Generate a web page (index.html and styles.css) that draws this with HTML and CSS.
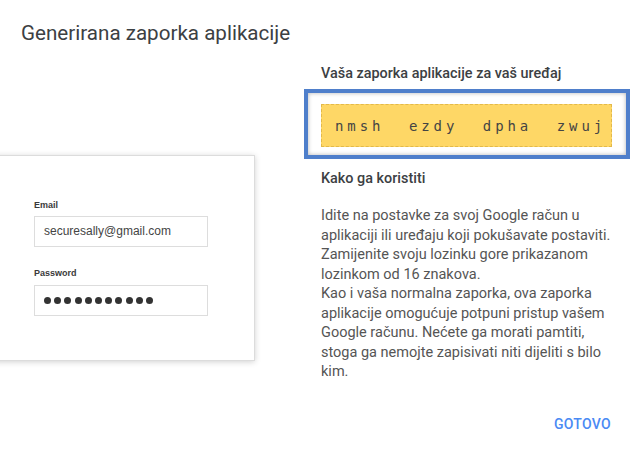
FILE: index.html
```html
<!DOCTYPE html>
<html lang="hr">
<head>
    <meta charset="UTF-8">
    <meta name="viewport" content="width=device-width, initial-scale=1.0">
    <title>Generirana zaporka aplikacije</title>
    <link rel="stylesheet" href="styles.css">
</head>
<body>

    <div class="dialog">
        <h1 class="dialog-title">Generirana zaporka aplikacije</h1>

        <div class="dialog-body">
            <!-- Sample sign-in form -->
            <div class="preview">
                <div class="login-card">
                    <label class="field-label">Email</label>
                    <div class="field">securesally@gmail.com</div>
                    <label class="field-label pw-label">Password</label>
                    <div class="field dots">
                        <span></span><span></span><span></span><span></span>
                        <span></span><span></span><span></span><span></span>
                        <span></span><span></span><span></span>
                    </div>
                </div>
            </div>

            <div class="info">
                <h2 class="info-title">Vaša zaporka aplikacije za vaš uređaj</h2>
                <div class="highlight">
                    <div class="app-password">
                        <span>nmsh</span>
                        <span>ezdy</span>
                        <span>dpha</span>
                        <span>zwuj</span>
                    </div>
                </div>
                <h3 class="info-heading">Kako ga koristiti</h3>
                <p class="info-text">Idite na postavke za svoj Google račun u aplikaciji ili uređaju koji pokušavate postaviti. Zamijenite svoju lozinku gore prikazanom lozinkom od 16 znakova.<br>Kao i vaša normalna zaporka, ova zaporka aplikacije omogućuje potpuni pristup vašem Google računu. Nećete ga morati pamtiti, stoga ga nemojte zapisivati niti dijeliti s bilo kim.</p>
            </div>
        </div>

        <div class="dialog-actions">
            <button class="done-btn">GOTOVO</button>
        </div>
    </div>

</body>
</html>
```

FILE: styles.css
```css
/* General Styles */
body {
    margin: 0;
    padding: 0;
    font-family: Roboto, "Liberation Sans", Arial, sans-serif;
    background-color: white;
    overflow: hidden;
}

.dialog {
    width: 643px;
    height: 454px;
    overflow: hidden;
}

.dialog-title {
    margin: 21px 0 0 21px;
    font-size: 20.6px;
    line-height: 24px;
    font-weight: 400;
    color: #3c4043;
}

/* Body: preview on the left, info on the right */
.dialog-body {
    display: flex;
    align-items: flex-start;
    gap: 66px;
    margin-top: 19px;
}

.preview {
    width: 255px;
    flex-shrink: 0;
}

.login-card {
    margin: 91px 0 0 -20px;
    padding: 43px 46px 44px 53px;
    background-color: white;
    border: 1px solid #dcdcdc;
    box-shadow: 0 1px 6px rgba(0, 0, 0, 0.18);
    font-family: "Liberation Sans", Arial, sans-serif;
}

.field-label {
    display: block;
    font-size: 9px;
    line-height: 12px;
    font-weight: bold;
    color: #3a3a3a;
    margin-bottom: 5px;
}

.pw-label {
    margin-top: 20px;
    margin-bottom: 6px;
}

.field {
    height: 29px;
    border: 1px solid #dddddd;
    padding-left: 9px;
    font-size: 12px;
    line-height: 29px;
    color: #444;
}

.dots {
    display: flex;
    align-items: center;
    gap: 3.2px;
}

.dots span {
    width: 7px;
    height: 7px;
    border-radius: 50%;
    background-color: #333;
}

/* Right column */
.info {
    width: 291px;
}

.info-title {
    margin: 0;
    font-size: 14.4px;
    line-height: 20px;
    font-weight: 500;
    color: #3c4043;
}

.highlight {
    box-sizing: border-box;
    margin: 5px 0 0 -17px;
    width: 326px;
    padding: 11px 0 8px 13px;
    border: 4px solid #4f7fcb;
    box-shadow: inset 0 0 4px rgba(0, 0, 0, 0.3);
}

.app-password {
    box-sizing: border-box;
    width: 291px;
    height: 43px;
    display: flex;
    align-items: center;
    gap: 24.6px;
    padding-left: 13px;
    background-color: #fed766;
    border: 1px dashed #e3b94a;
    font-family: "DejaVu Sans Mono", "Liberation Mono", monospace;
    font-size: 14px;
    letter-spacing: 3.9px;
    color: #444;
}

.info-heading {
    margin: 10px 0 0 0;
    font-size: 14.4px;
    line-height: 20px;
    font-weight: 500;
    color: #3c4043;
}

.info-text {
    margin: 17px 0 0 0;
    font-size: 14.5px;
    line-height: 19.5px;
    color: #555;
}

/* Actions */
.dialog-actions {
    display: flex;
    justify-content: flex-end;
    padding-right: 32px;
    margin-top: 32px;
}

.done-btn {
    background: none;
    border: none;
    padding: 0;
    font-family: Roboto, Arial, sans-serif;
    font-size: 14px;
    line-height: 20px;
    font-weight: 500;
    letter-spacing: 0.3px;
    color: #4a8af4;
    cursor: pointer;
}
```
